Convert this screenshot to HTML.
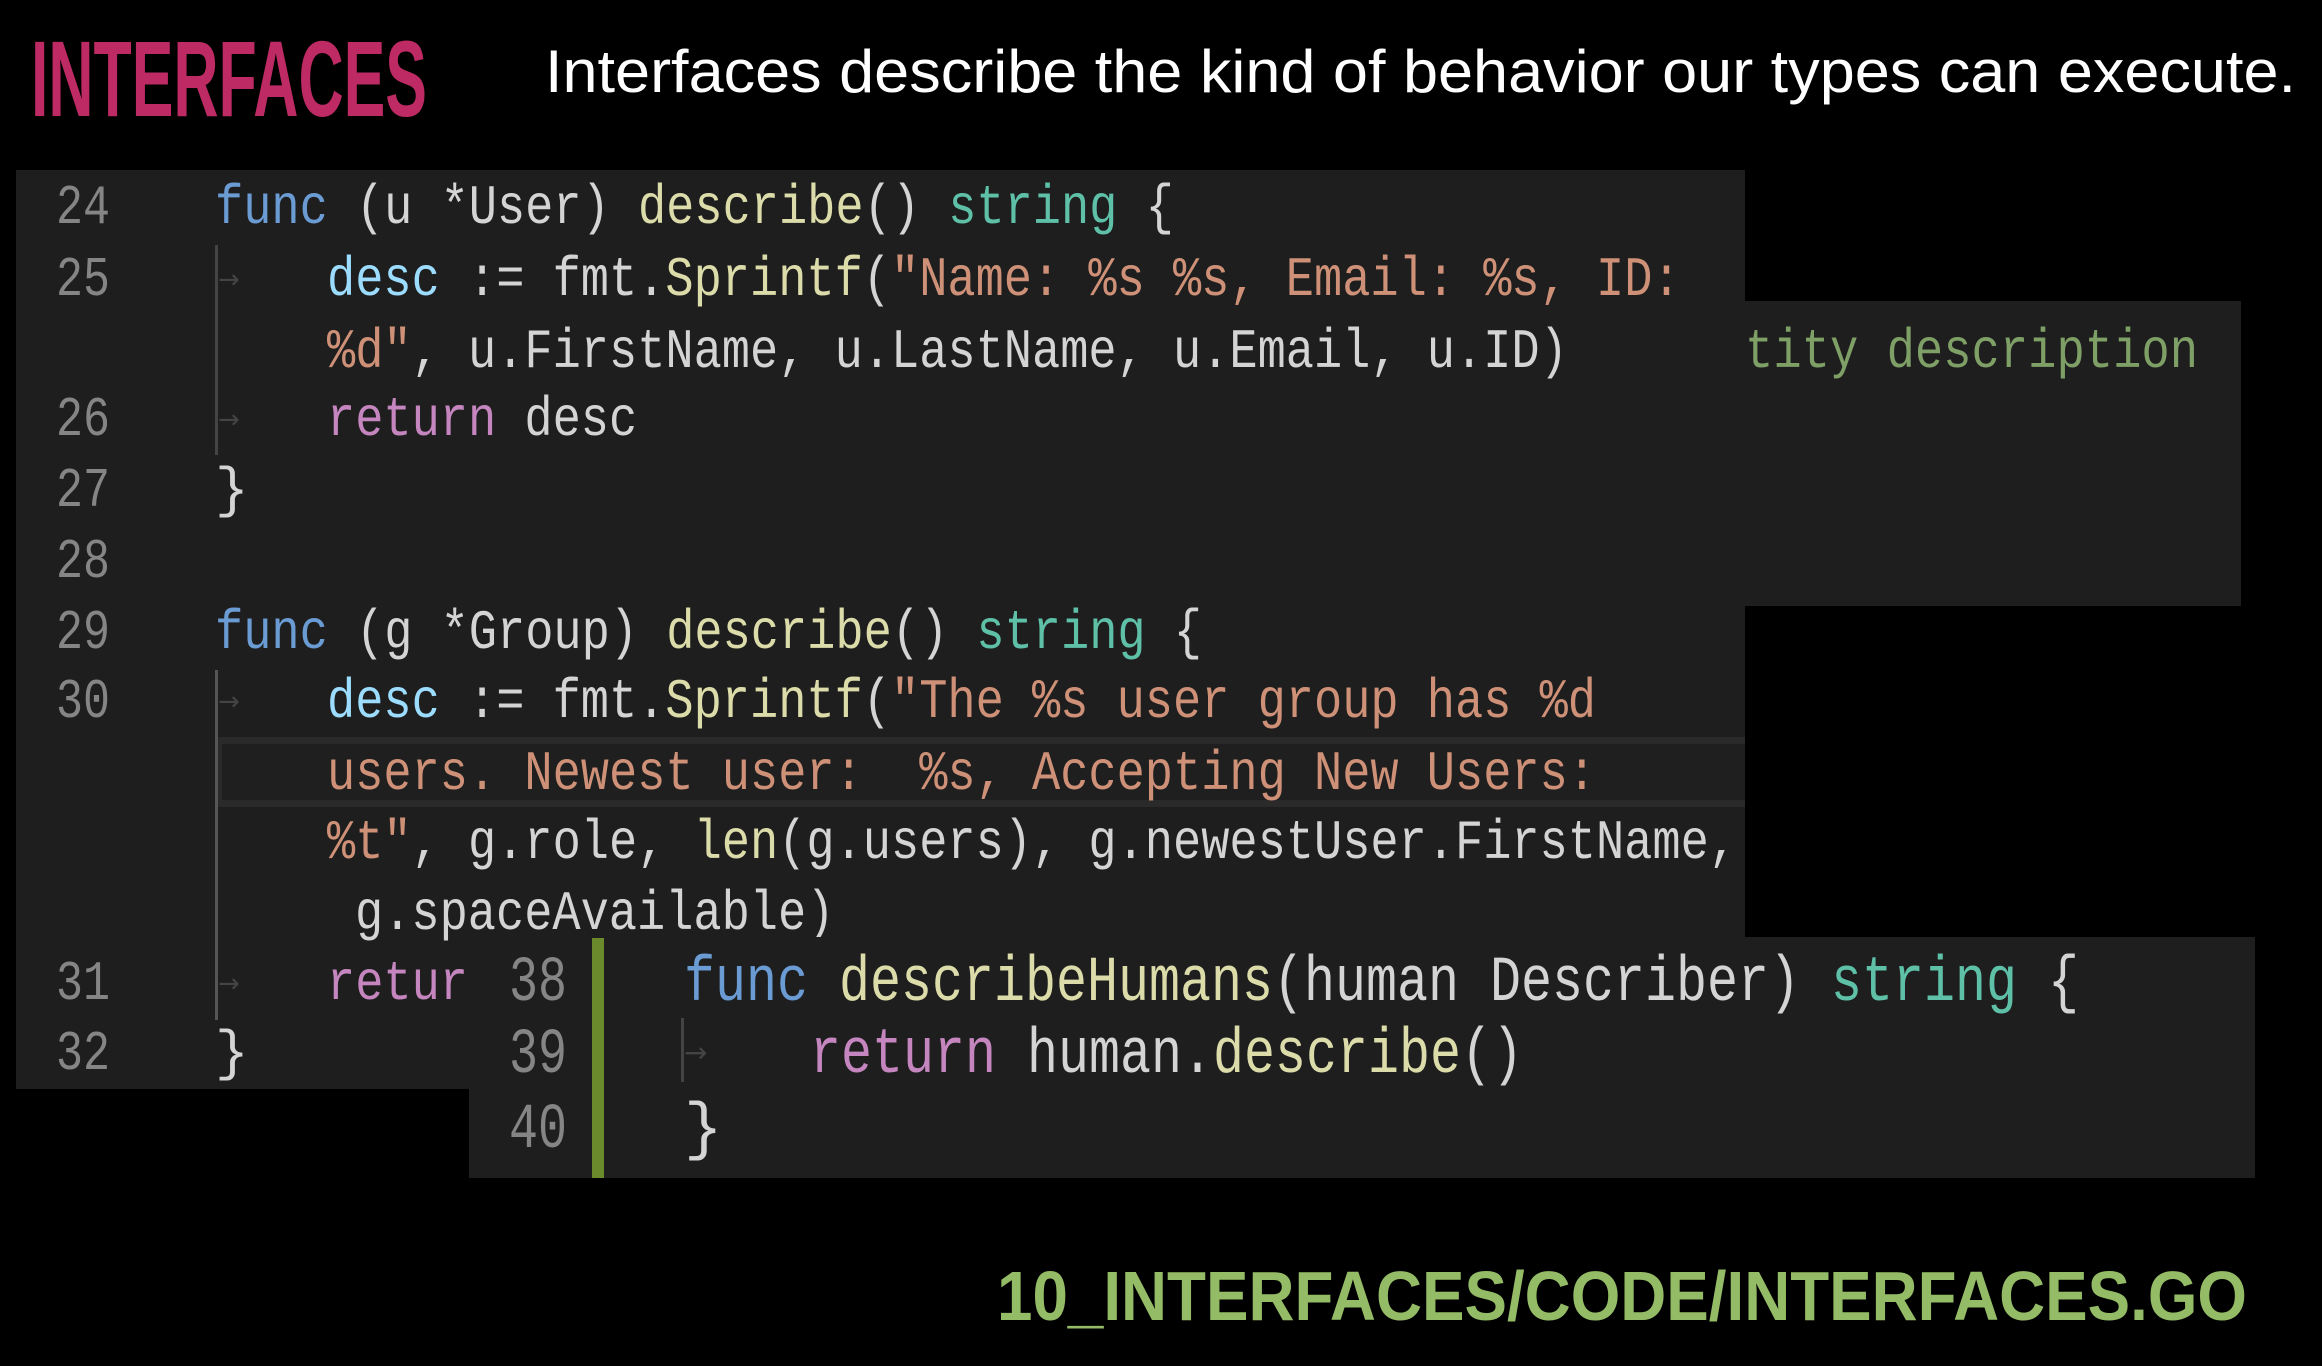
<!DOCTYPE html>
<html><head><meta charset="utf-8"><style>
html,body{margin:0;padding:0;background:#000;width:2322px;height:1366px;overflow:hidden}
svg{display:block}
.m{font-family:"Liberation Mono","DejaVu Sans Mono",monospace;font-size:56px}
.b{font-family:"Liberation Mono","DejaVu Sans Mono",monospace;font-size:64px}
.ln{fill:#858585}
.k{fill:#6a9bd3}.f{fill:#dcdcaa}.t{fill:#5fc0a8}.s{fill:#ce9178}.v{fill:#9cdcfe}.r{fill:#c586c0}.p{fill:#d4d4d4}.c{fill:#7e9f65}
</style></head><body>
<svg width="2322" height="1366" viewBox="0 0 2322 1366" xmlns="http://www.w3.org/2000/svg" xml:space="preserve">
<rect width="2322" height="1366" fill="#000"/>
<text x="31" y="116" font-family="Liberation Sans, sans-serif" font-weight="bold" font-size="108" fill="#bd2a64" textLength="396" lengthAdjust="spacingAndGlyphs">INTERFACES</text>
<text x="545" y="92" font-family="Liberation Sans, sans-serif" font-size="60" fill="#fff" textLength="1751" lengthAdjust="spacingAndGlyphs">Interfaces describe the kind of behavior our types can execute.</text>

<rect x="1745" y="301" width="496" height="305" fill="#1e1e1e"/>
<text class="m c" x="1745" y="367" textLength="453" lengthAdjust="spacingAndGlyphs">tity description</text>

<rect x="16" y="170" width="1729" height="919" fill="#1e1e1e"/>
<rect x="215" y="737" width="1530" height="70" fill="#2a2a2a"/>
<rect x="222" y="744" width="1523" height="56" fill="#1f1f1f"/>
<rect x="215" y="245" width="3" height="210" fill="#444"/>
<rect x="215" y="670" width="3" height="350" fill="#555"/>
<g fill="#444" font-family="DejaVu Sans, sans-serif" font-size="26"><text x="218" y="288">→</text><text x="218" y="428">→</text><text x="218" y="710">→</text><text x="218" y="992">→</text></g>

<g class="m ln" font-size="56">
<text x="56" y="223" textLength="54" lengthAdjust="spacingAndGlyphs">24</text><text x="56" y="295" textLength="54" lengthAdjust="spacingAndGlyphs">25</text><text x="56" y="435" textLength="54" lengthAdjust="spacingAndGlyphs">26</text>
<text x="56" y="506" textLength="54" lengthAdjust="spacingAndGlyphs">27</text><text x="56" y="577" textLength="54" lengthAdjust="spacingAndGlyphs">28</text><text x="56" y="648" textLength="54" lengthAdjust="spacingAndGlyphs">29</text>
<text x="56" y="717" textLength="54" lengthAdjust="spacingAndGlyphs">30</text><text x="56" y="999" textLength="54" lengthAdjust="spacingAndGlyphs">31</text><text x="56" y="1069" textLength="54" lengthAdjust="spacingAndGlyphs">32</text>
</g>
<g class="m">
<text x="215" y="223" textLength="958.8" lengthAdjust="spacingAndGlyphs"><tspan class="k">func</tspan><tspan class="p"> (u *User) </tspan><tspan class="f">describe</tspan><tspan class="p">() </tspan><tspan class="t">string</tspan><tspan class="p"> {</tspan></text>
<text x="327" y="295" textLength="1353.6" lengthAdjust="spacingAndGlyphs"><tspan class="v">desc</tspan><tspan class="p"> := fmt.</tspan><tspan class="f">Sprintf</tspan><tspan class="p">(</tspan><tspan class="s">"Name: %s %s, Email: %s, ID:</tspan></text>
<text x="327" y="367" textLength="1240.8" lengthAdjust="spacingAndGlyphs"><tspan class="s">%d"</tspan><tspan class="p">, u.FirstName, u.LastName, u.Email, u.ID)</tspan></text>
<text x="327" y="435" textLength="310.2" lengthAdjust="spacingAndGlyphs"><tspan class="r">return</tspan><tspan class="p"> desc</tspan></text>
<text x="215" y="506" class="p">}</text>
<text x="215" y="648" textLength="987" lengthAdjust="spacingAndGlyphs"><tspan class="k">func</tspan><tspan class="p"> (g *Group) </tspan><tspan class="f">describe</tspan><tspan class="p">() </tspan><tspan class="t">string</tspan><tspan class="p"> {</tspan></text>
<text x="327" y="717" textLength="1269" lengthAdjust="spacingAndGlyphs"><tspan class="v">desc</tspan><tspan class="p"> := fmt.</tspan><tspan class="f">Sprintf</tspan><tspan class="p">(</tspan><tspan class="s">"The %s user group has %d</tspan></text>
<text x="327" y="789" textLength="1269" lengthAdjust="spacingAndGlyphs" class="s">users. Newest user:&#160;&#160;%s, Accepting New Users:</text>
<text x="327" y="858" textLength="1410" lengthAdjust="spacingAndGlyphs"><tspan class="s">%t"</tspan><tspan class="p">, g.role, </tspan><tspan class="f">len</tspan><tspan class="p">(g.users), g.newestUser.FirstName,</tspan></text>
<text x="355" y="929" textLength="479.4" lengthAdjust="spacingAndGlyphs" class="p">g.spaceAvailable)</text>
<text x="327" y="999" textLength="141" lengthAdjust="spacingAndGlyphs" class="r">retur</text>
<text x="215" y="1069" class="p">}</text>
</g>

<rect x="469" y="937" width="1786" height="241" fill="#1e1e1e"/>
<rect x="592" y="938" width="12" height="240" fill="#6a8a2c"/>
<rect x="681" y="1018" width="3" height="64" fill="#444"/>
<text x="684" y="1062" fill="#444" font-family="DejaVu Sans, sans-serif" font-size="28">→</text>
<g class="b ln"><text x="509" y="1000" textLength="58" lengthAdjust="spacingAndGlyphs">38</text><text x="509" y="1072" textLength="58" lengthAdjust="spacingAndGlyphs">39</text><text x="509" y="1147" textLength="58" lengthAdjust="spacingAndGlyphs">40</text></g>
<g class="b">
<text x="684" y="1000" textLength="1395" lengthAdjust="spacingAndGlyphs"><tspan class="k">func</tspan><tspan class="p"> </tspan><tspan class="f">describeHumans</tspan><tspan class="p">(human Describer) </tspan><tspan class="t">string</tspan><tspan class="p"> {</tspan></text>
<text x="810" y="1072" textLength="713" lengthAdjust="spacingAndGlyphs"><tspan class="r">return</tspan><tspan class="p"> human.</tspan><tspan class="f">describe</tspan><tspan class="p">()</tspan></text>
<text x="684" y="1147" class="p">}</text>
</g>

<text x="997" y="1320" font-family="Liberation Sans, sans-serif" font-weight="bold" font-size="70" fill="#94bb65" textLength="1250" lengthAdjust="spacingAndGlyphs">10_INTERFACES/CODE/INTERFACES.GO</text>
</svg>
</body></html>
